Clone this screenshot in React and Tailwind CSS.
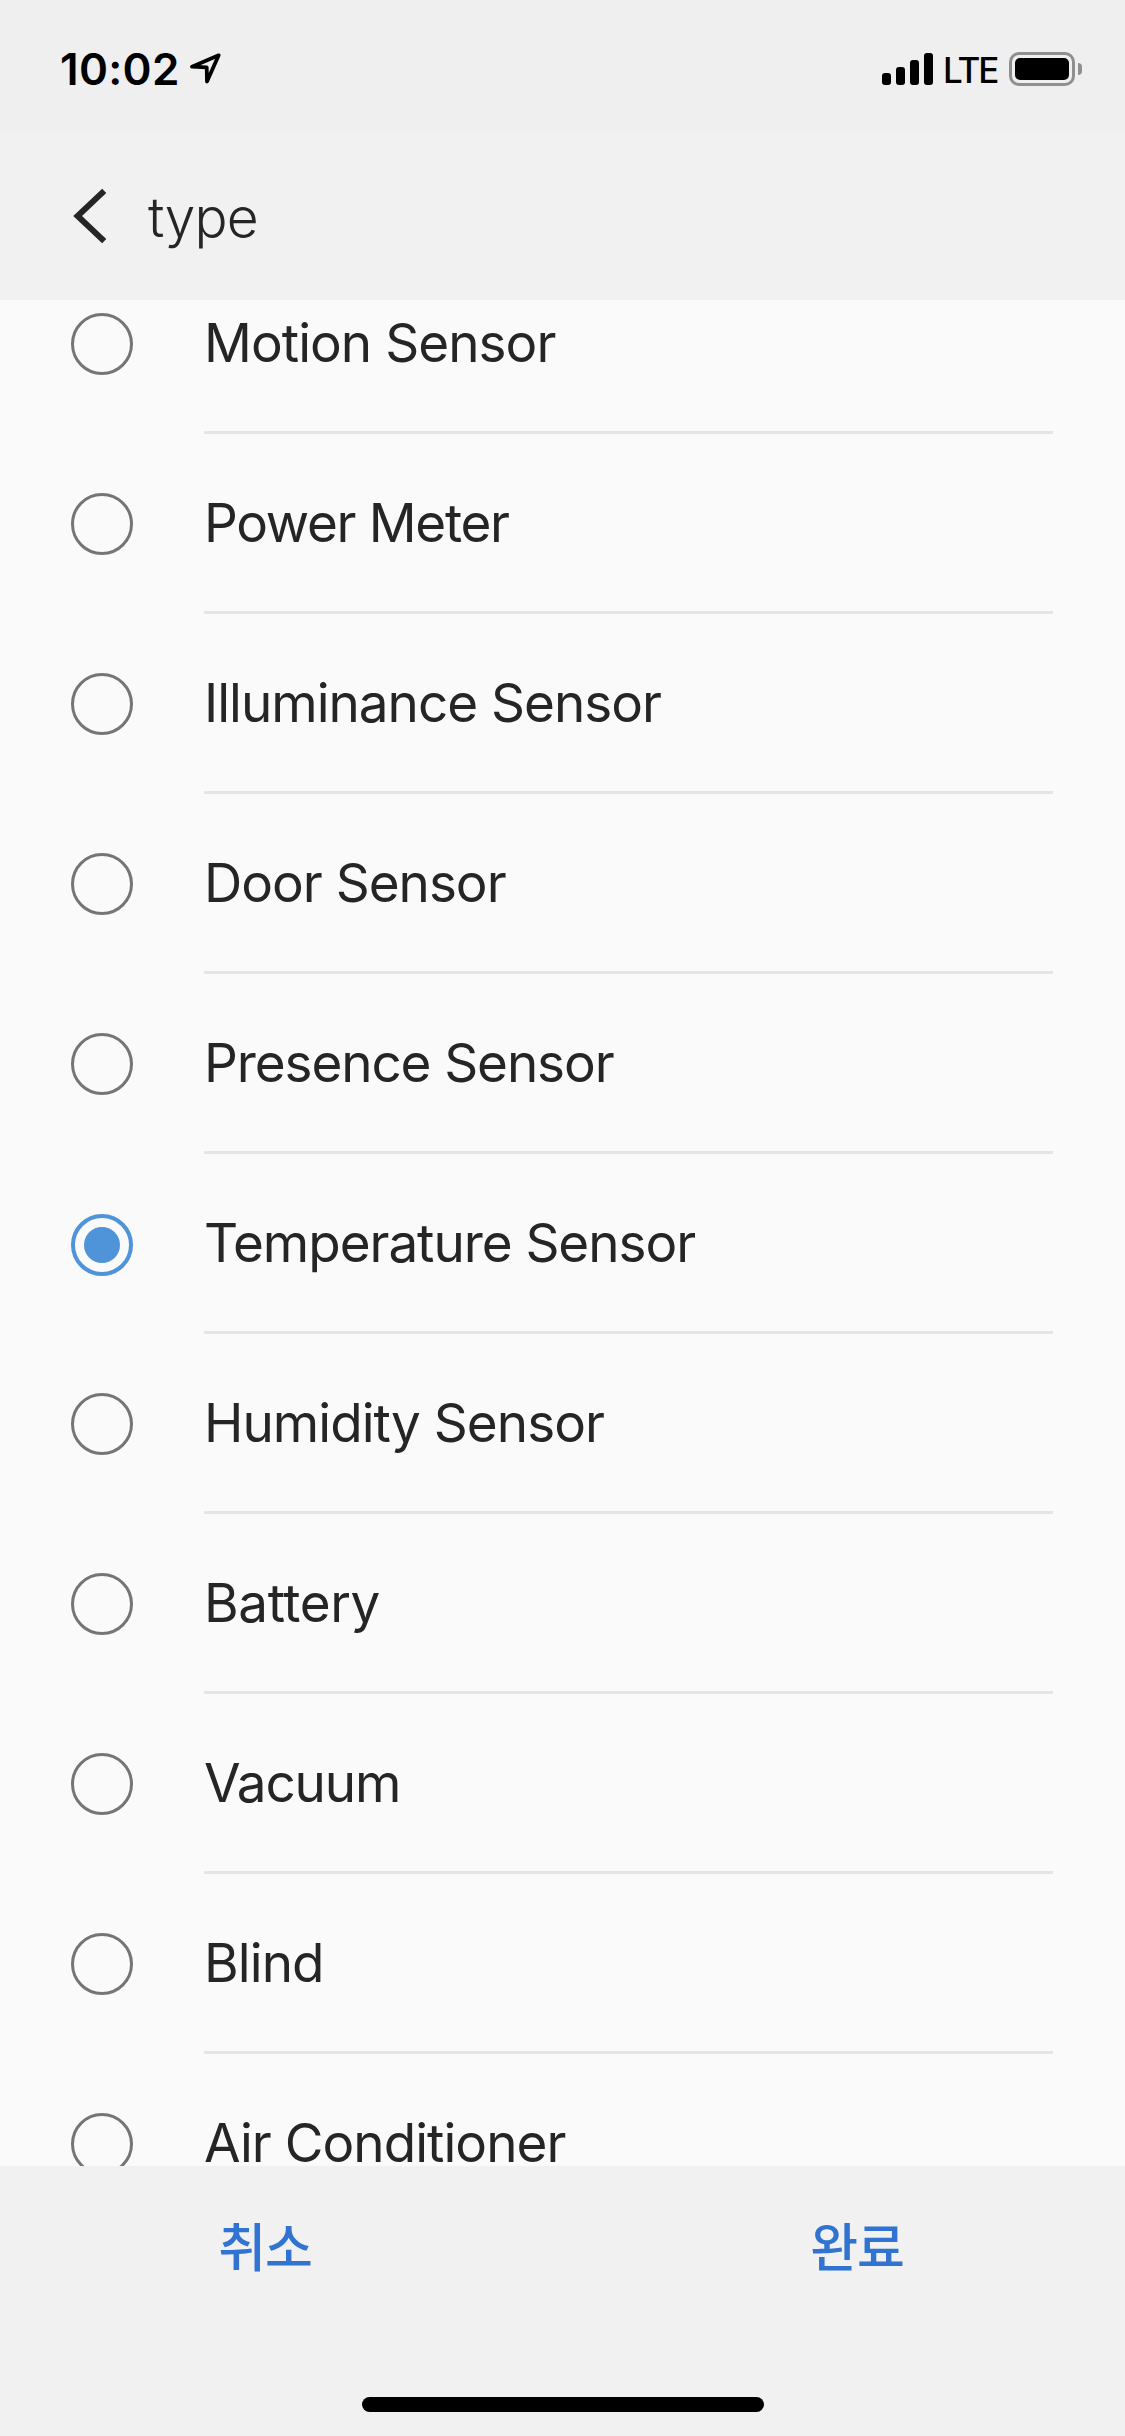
import React, { useState } from "react";

const types = [
  { name: "Motion Sensor", spacing: "tracking-[-0.95px]" },
  { name: "Power Meter", spacing: "tracking-[-1.3px]" },
  { name: "Illuminance Sensor", spacing: "tracking-[-1px]" },
  { name: "Door Sensor", spacing: "tracking-[-1px]" },
  { name: "Presence Sensor", spacing: "tracking-[-1.1px]" },
  { name: "Temperature Sensor", spacing: "tracking-[-1.05px]" },
  { name: "Humidity Sensor", spacing: "tracking-[-0.95px]" },
  { name: "Battery", spacing: "tracking-[-0.4px]" },
  { name: "Vacuum", spacing: "tracking-[-1.1px]" },
  { name: "Blind", spacing: "tracking-[-0.9px]" },
  { name: "Air Conditioner", spacing: "tracking-[-0.95px]" },
];

const StatusBar = () => {
  return (
    <div className="flex h-[132px] shrink-0 items-start justify-between bg-[#efefef] pl-[60px] pr-[43px] pt-[42px] text-black">
      <div className="flex h-[54px] items-center">
        <span className="w-[120px] whitespace-nowrap text-[44px] font-semibold leading-[54px] tracking-[0.3px]">
          10:02
        </span>
        <svg className="ml-[9px] h-[40px] w-[36px]" viewBox="0 0 36 40" fill="none">
          <path
            d="M29.7 6.3 3 17.7 17.7 18.3 18 32.5Z"
            stroke="currentColor"
            strokeWidth="3.8"
            strokeLinejoin="round"
          />
        </svg>
      </div>
      <div className="flex h-[54px] items-center">
        <div className="flex h-[32px] items-end gap-[5px]">
          <div className="h-[12px] w-[9px] rounded-[3px] bg-black" />
          <div className="h-[18px] w-[9px] rounded-[3px] bg-black" />
          <div className="h-[25px] w-[9px] rounded-[3px] bg-black" />
          <div className="h-[32px] w-[9px] rounded-[3px] bg-black" />
        </div>
        <span className="ml-[10px] w-[66px] whitespace-nowrap pt-[2px] text-[35px] font-[450] leading-[48px] tracking-[-2.1px]">
          LTE
        </span>
        <div className="flex h-[34px] w-[66px] rounded-[10px] border-[3px] border-[#8f8f8f] p-[3px]">
          <div className="flex-1 rounded-[5px] bg-black" />
        </div>
        <div className="ml-[3px] h-[12px] w-[4px] rounded-r-full bg-[#8f8f8f]" />
      </div>
    </div>
  );
};

const Header = ({ title }) => {
  return (
    <div className="flex h-[168px] shrink-0 items-center bg-[#f1f1f1] pl-[70px]">
      <svg className="h-[60px] w-[40px]" viewBox="0 0 40 60" fill="none">
        <path d="M34.2 4.9 7.6 30 34.2 55.1" stroke="#252525" strokeWidth="6" />
      </svg>
      <h1 className="ml-[38px] pt-[1px] text-[55px] font-[320] leading-[66px] tracking-[-0.8px]">
        {title}
      </h1>
    </div>
  );
};

const Radio = ({ checked }) => {
  if (checked) {
    return (
      <span className="mt-[2px] flex size-[62px] items-center justify-center rounded-full border-4 border-[#4f93d8]">
        <span className="size-[36px] rounded-full bg-[#4f93d8]" />
      </span>
    );
  }
  return <span className="size-[62px] rounded-full border-[3px] border-[#757575]" />;
};

const App = () => {
  const [selected, setSelected] = useState("Temperature Sensor");

  return (
    <div className="flex h-[2436px] w-[1125px] flex-col overflow-hidden bg-[#fafafa] font-['Inter','Noto_Sans_CJK_KR',sans-serif] text-[#252525]">
      <StatusBar />
      <Header title="type" />

      {/* The list is scrolled a little, so the first and last rows are cut */}
      <div className="flex h-[1866px] shrink-0 flex-col overflow-hidden">
        <div className="-mt-[46px]">
          {types.map((type) => (
            <button
              key={type.name}
              type="button"
              className="flex h-[180px] w-full items-center pl-[71px] pr-[72px] text-left"
              onClick={() => setSelected(type.name)}
            >
              <Radio checked={selected === type.name} />
              <span className="ml-[71px] flex h-full flex-1 items-center border-b-[3px] border-[#e5e5e5]">
                <span
                  className={`whitespace-nowrap text-[53px] leading-[64px] ${type.spacing}`}
                >
                  {type.name}
                </span>
              </span>
            </button>
          ))}
        </div>
      </div>

      <div className="flex h-[270px] shrink-0 flex-col items-center justify-between bg-[#f1f1f1] pb-[24px]">
        <div className="flex h-[166px] w-full justify-between pl-[202px] pr-[205px] text-[52px] font-medium text-[#3173d1]">
          <button type="button" className="h-[166px] w-[126px] whitespace-nowrap tracking-[-1px]">
            취소
          </button>
          <button type="button" className="h-[166px] w-[126px] whitespace-nowrap tracking-[-1px]">
            완료
          </button>
        </div>
        <div className="h-[15px] w-[402px] rounded-full bg-black" />
      </div>
    </div>
  );
};

export default App;
